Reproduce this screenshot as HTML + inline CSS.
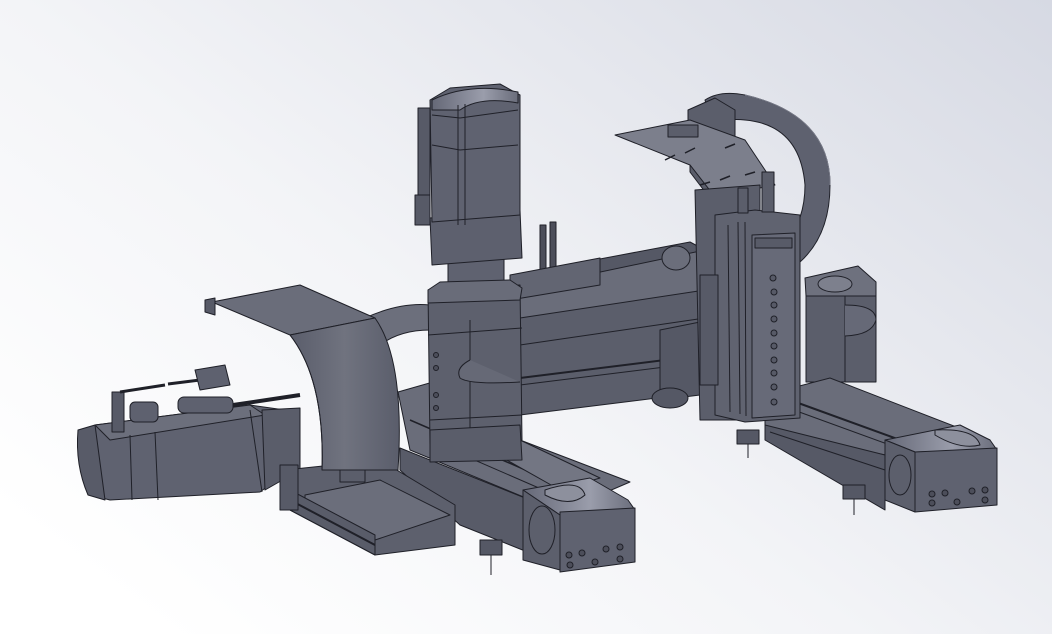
<!DOCTYPE html>
<html><head><meta charset="utf-8"><style>
html,body{margin:0;padding:0;width:1052px;height:634px;overflow:hidden}
svg{display:block}
</style></head><body>
<svg width="1052" height="634" viewBox="0 0 1052 634" xmlns="http://www.w3.org/2000/svg">
<defs>
<linearGradient id="bg" x1="0" y1="0.8" x2="1" y2="0">
<stop offset="0" stop-color="#ffffff"/><stop offset="0.4" stop-color="#f3f4f7"/><stop offset="1" stop-color="#d6d9e3"/>
</linearGradient>
<linearGradient id="arc" x1="0" y1="0" x2="1" y2="0">
<stop offset="0" stop-color="#5a5d6b"/><stop offset="0.5" stop-color="#70737f"/><stop offset="1" stop-color="#5a5d6b"/>
</linearGradient>
<linearGradient id="top" x1="0" y1="0" x2="1" y2="0">
<stop offset="0" stop-color="#656877"/><stop offset="0.6" stop-color="#9a9dab"/><stop offset="1" stop-color="#6a6d7b"/>
</linearGradient>
</defs>
<rect width="1052" height="634" fill="url(#bg)"/>
<g stroke="#1f2028" stroke-width="1" stroke-linejoin="round" fill="#5e616f">

<path d="M365,318 Q400,302 430,305 L430,330 Q400,330 380,345 Z" fill="#6c6f7c"/>

<polygon points="505,282 690,248 705,255 705,300 520,330" fill="#6a6d7a"/>
<polygon points="515,275 690,242 705,250 515,290" fill="#555865"/>
<polygon points="520,318 705,290 705,392 520,415" fill="#5b5e6b"/>
<line x1="520" y1="345" x2="705" y2="318"/>
<line x1="520" y1="378" x2="705" y2="355" stroke-width="2"/>
<line x1="520" y1="385" x2="705" y2="362"/>
<polygon points="660,330 700,322 700,395 660,400" fill="#555865"/>
<ellipse cx="670" cy="398" rx="18" ry="10" fill="#555865"/>
<rect x="540" y="225" width="6" height="45" fill="#4c4e5a"/><rect x="550" y="222" width="6" height="48" fill="#4c4e5a"/>
<polygon points="510,275 600,258 600,285 510,300" fill="#626572"/>
<ellipse cx="676" cy="258" rx="14" ry="12" fill="#6b6e7b"/>

<!-- right motor box -->
<polygon points="805,278 858,266 876,282 876,296 806,296" fill="#6e717e"/>
<ellipse cx="835" cy="284" rx="17" ry="8" fill="#7d808d"/>
<rect x="806" y="296" width="70" height="86" fill="#5b5e6b"/>
<line x1="845" y1="296" x2="845" y2="382"/>
<path d="M845,305 Q876,305 876,320 Q872,335 845,336" fill="#666977"/>

<polygon points="765,395 830,378 990,440 885,455 765,430" fill="#6a6d7a"/>
<polygon points="765,425 885,455 885,510 765,440" fill="#565966"/>
<line x1="780" y1="405" x2="890" y2="445"/>
<line x1="790" y1="400" x2="900" y2="440" stroke-width="2"/>
<line x1="770" y1="432" x2="885" y2="470"/>
<polygon points="885,440 960,425 990,440 997,450 915,452" fill="url(#top)"/>
<polygon points="885,440 915,452 915,512 885,500" fill="#5c5f6c"/>
<ellipse cx="900" cy="475" rx="11" ry="20" fill="#5c5f6c"/>
<polygon points="915,452 997,448 997,505 915,512" fill="#5f6270"/>
<path d="M935,430 Q975,428 980,445 Q960,450 935,435 Z" fill="#8d909d"/>
<g fill="#4c4e5a"><circle cx="932" cy="494" r="3"/><circle cx="945" cy="493" r="3"/><circle cx="972" cy="491" r="3"/><circle cx="985" cy="490" r="3"/><circle cx="932" cy="503" r="3"/><circle cx="957" cy="502" r="3"/><circle cx="985" cy="500" r="3"/></g>
<rect x="737" y="430" width="22" height="14" fill="#555865"/><line x1="748" y1="444" x2="748" y2="458"/>
<rect x="843" y="485" width="22" height="14" fill="#555865"/><line x1="854" y1="499" x2="854" y2="515"/>

<path d="M705,100 Q720,90 745,95 Q830,115 830,185 Q830,235 800,262 L785,245 Q805,220 805,185 Q800,125 745,120 Q725,118 712,125 Z" fill="#5e616f"/>
<path d="M745,95 Q830,115 830,185" fill="none" stroke="#777a88"/>
<polygon points="688,110 715,98 735,110 735,140 700,145 688,130" fill="#5b5e6b"/>
<polygon points="615,135 690,120 745,140 775,185 715,197 690,165" fill="#7c7f8c"/>
<polygon points="690,165 715,197 715,205 690,172" fill="#5a5d6a"/>
<g stroke-width="1.5"><line x1="665" y1="160" x2="675" y2="155"/><line x1="685" y1="153" x2="695" y2="148"/><line x1="725" y1="148" x2="735" y2="144"/><line x1="700" y1="185" x2="710" y2="182"/><line x1="720" y1="180" x2="730" y2="176"/><line x1="745" y1="175" x2="755" y2="172"/></g>
<rect x="668" y="125" width="30" height="12" fill="#5b5e6b"/>

<polygon points="695,190 760,185 760,420 700,420" fill="#5b5e6b"/>
<polygon points="715,215 755,210 800,215 800,418 745,422 715,415" fill="#606370"/>
<polygon points="752,235 795,233 795,415 752,418" fill="#676a78"/>
<rect x="755" y="238" width="37" height="10" fill="#585b68"/>
<g fill="#575a67"><circle cx="773" cy="278" r="3"/><circle cx="774" cy="292" r="3"/><circle cx="774" cy="305" r="3"/><circle cx="774" cy="319" r="3"/><circle cx="774" cy="333" r="3"/><circle cx="774" cy="346" r="3"/><circle cx="774" cy="360" r="3"/><circle cx="774" cy="373" r="3"/><circle cx="774" cy="387" r="3"/><circle cx="774" cy="402" r="3"/></g>
<line x1="728" y1="225" x2="730" y2="412"/><line x1="738" y1="222" x2="740" y2="414"/><line x1="745" y1="222" x2="746" y2="416"/>
<rect x="762" y="172" width="12" height="40" fill="#5b5e6b"/>
<rect x="738" y="188" width="10" height="25" fill="#5b5e6b"/>
<rect x="700" y="275" width="18" height="110" fill="#575a67"/>

<polygon points="398,392 440,380 520,440 630,482 560,512 410,450" fill="#6a6d7a"/>
<polygon points="400,448 560,512 560,565 460,525 400,470" fill="#585b68"/>
<line x1="410" y1="420" x2="560" y2="485" stroke-width="1.5"/>
<line x1="440" y1="445" x2="555" y2="495"/>
<polygon points="480,445 520,440 600,478 560,490" fill="#737683"/>

<rect x="448" y="255" width="56" height="45" fill="#5f6270"/>
<polygon points="428,290 520,285 522,440 430,445" fill="#5d606d"/>
<polygon points="428,290 440,282 510,280 522,288 520,300 428,303" fill="#696c79"/>
<line x1="428" y1="335" x2="522" y2="328"/><line x1="430" y1="420" x2="522" y2="415"/>
<line x1="470" y1="320" x2="470" y2="440"/>
<path d="M470,360 Q455,368 460,378 Q470,385 520,382" fill="#666976"/>
<g fill="#4c4e5a"><circle cx="436" cy="355" r="2.5"/><circle cx="436" cy="368" r="2.5"/><circle cx="436" cy="395" r="2.5"/><circle cx="436" cy="408" r="2.5"/></g>
<polygon points="430,430 520,425 522,460 430,462" fill="#5a5d6a"/>

<polygon points="430,218 520,210 522,258 432,265" fill="#5d606e"/>
<polygon points="430,100 450,88 500,84 520,95 520,215 432,222" fill="#5f6270"/>
<path d="M432,100 Q470,82 518,92 L518,103 Q480,96 460,110 L432,110 Z" fill="url(#top)"/>
<line x1="432" y1="115" x2="460" y2="118"/><line x1="460" y1="118" x2="518" y2="110"/>
<line x1="432" y1="145" x2="460" y2="150"/><line x1="460" y1="150" x2="518" y2="145"/>
<line x1="458" y1="105" x2="458" y2="225"/><line x1="465" y1="104" x2="465" y2="225"/>
<rect x="418" y="108" width="12" height="110" fill="#575a67"/>
<rect x="415" y="195" width="15" height="30" fill="#575a67"/>

<polygon points="95,425 250,405 285,410 290,470 260,492 110,500 90,495" fill="#5f6270"/>
<path d="M78,430 L95,425 L105,500 L88,495 Q75,465 78,430 Z" fill="#585b68"/>
<polygon points="95,425 250,405 265,415 110,440" fill="#6c6f7c"/>
<line x1="155" y1="432" x2="158" y2="500"/><line x1="250" y1="410" x2="262" y2="492"/>
<line x1="130" y1="435" x2="132" y2="500"/>
<polygon points="262,410 300,408 300,470 265,490" fill="#5a5d6a"/>
<rect x="112" y="392" width="12" height="40" fill="#575a67"/>
<rect x="130" y="402" width="28" height="20" rx="5" fill="#5e616f"/>
<rect x="178" y="397" width="55" height="16" rx="6" fill="#5e616f"/>
<line x1="233" y1="405" x2="300" y2="395" stroke-width="4"/>
<line x1="120" y1="392" x2="165" y2="385" stroke-width="3"/>
<line x1="168" y1="384" x2="200" y2="380" stroke-width="3"/>
<polygon points="195,370 225,365 230,385 200,390" fill="#5e616f"/>

<polygon points="285,470 380,460 455,505 455,545 375,555 290,510" fill="#5d606d"/>
<polygon points="305,495 380,480 450,515 375,540 305,505" fill="#6b6e7b"/>
<polygon points="290,490 375,535 375,555 290,510" fill="#595c69"/>
<line x1="290" y1="500" x2="375" y2="545" stroke-width="2"/>
<rect x="340" y="468" width="25" height="14" fill="#5b5e6b"/>
<rect x="280" y="465" width="18" height="45" fill="#575a67"/>

<polygon points="212,302 300,285 375,318 290,335" fill="#6a6d7a"/>
<path d="M290,335 L375,318 Q405,360 398,470 L322,470 Q325,380 290,335 Z" fill="url(#arc)"/>
<path d="M290,335 Q325,380 322,470" fill="none"/>
<polygon points="205,300 215,298 215,315 205,312" fill="#575a67"/>

<polygon points="523,490 590,478 628,500 635,510 560,515" fill="url(#top)"/>
<polygon points="523,490 560,515 560,570 523,560" fill="#5c5f6c"/>
<ellipse cx="542" cy="530" rx="13" ry="24" fill="#5c5f6c"/>
<polygon points="560,512 635,508 635,562 560,572" fill="#5f6270"/>
<path d="M545,490 Q580,478 585,495 Q570,508 545,495 Z" fill="#8d909d"/>
<g fill="#4c4e5a"><circle cx="569" cy="555" r="3"/><circle cx="582" cy="553" r="3"/><circle cx="606" cy="549" r="3"/><circle cx="620" cy="547" r="3"/><circle cx="570" cy="565" r="3"/><circle cx="595" cy="562" r="3"/><circle cx="620" cy="559" r="3"/></g>
<rect x="480" y="540" width="22" height="15" fill="#555865"/><line x1="491" y1="555" x2="491" y2="575"/>
</g>
</svg>
</body></html>
